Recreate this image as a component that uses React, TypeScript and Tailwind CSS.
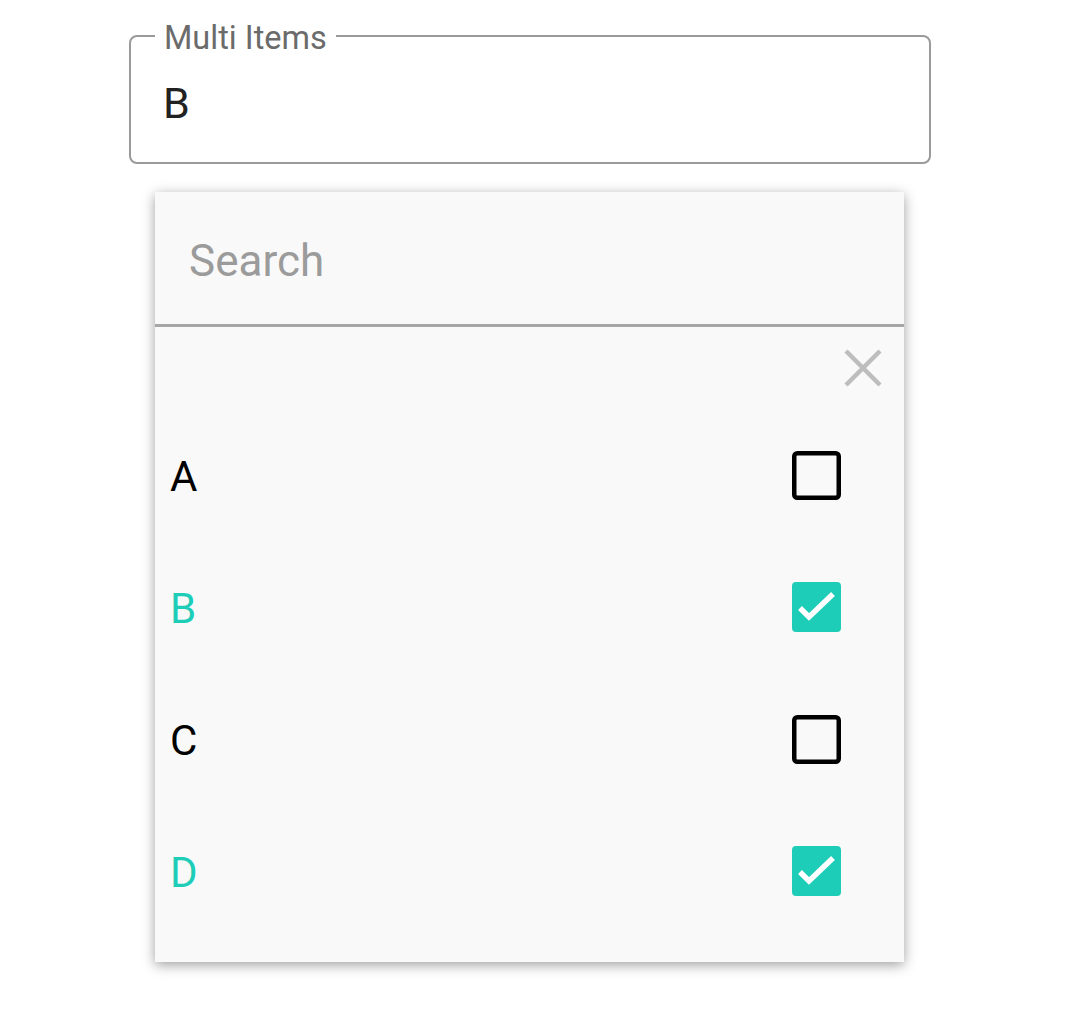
import React from "react";

const items = [
  { name: "A", checked: false },
  { name: "B", checked: true },
  { name: "C", checked: false },
  { name: "D", checked: true },
];

const CheckIcon: React.FC<{ checked: boolean }> = ({ checked }) =>
  checked ? (
    <svg width="49" height="50" viewBox="0 0 49 50">
      <rect x="0" y="0" width="49" height="50" rx="4" fill="#1dcdb8" />
      <path
        d="M8 26 L17 35 L41 12"
        fill="none"
        stroke="#ffffff"
        strokeWidth="5.5"
      />
    </svg>
  ) : (
    <svg width="49" height="49" viewBox="0 0 49 49">
      <rect
        x="2.25"
        y="2.25"
        width="44.5"
        height="44.5"
        rx="3"
        fill="none"
        stroke="#000000"
        strokeWidth="4.5"
      />
    </svg>
  );

export default function App() {
  return (
    <div
      className="min-h-[1021px] bg-white pt-[35px]"
      style={{ fontFamily: "Roboto, 'Noto Sans', sans-serif" }}
    >
      {/* outlined field */}
      <div className="relative ml-[129px] h-[129px] w-[802px] rounded-[8px] border-2 border-[#9a9a9a]">
        <span className="absolute -top-[18px] left-[24px] bg-white px-[9px] text-[32.5px] leading-[38px] text-[#6b6b6b]">
          Multi Items
        </span>
        <div className="pl-[32px] pt-[41px] text-[43px] leading-[50px] text-[#212121]">
          B
        </div>
      </div>

      {/* dropdown */}
      <div className="ml-[155px] mt-[28px] h-[770px] w-[749px] bg-[#f9f9f9] shadow-[0_3px_12px_rgba(0,0,0,0.38)]">
        <div className="flex h-[135px] items-center border-b-[3px] border-[#a6a6a6] pl-[34px]">
          <span className="pt-[5px] text-[44px] text-[#9b9b9b]">Search</span>
        </div>

        <div className="flex justify-end pr-[22px] pt-[22px]">
          <svg width="38" height="38" viewBox="0 0 38 38">
            <path
              d="M2 2 L36 36 M36 2 L2 36"
              stroke="#bdbdbd"
              strokeWidth="4.5"
            />
          </svg>
        </div>

        <div className="mt-[22px] flex flex-col">
          {items.map((item) => (
            <div
              key={item.name}
              className="flex h-[132px] items-center justify-between pl-[15px] pr-[63px]"
            >
              <span
                className={`pt-[3px] text-[42px] leading-none ${
                  item.checked ? "text-[#1dcdb8]" : "text-black"
                }`}
              >
                {item.name}
              </span>
              <CheckIcon checked={item.checked} />
            </div>
          ))}
        </div>
      </div>
    </div>
  );
}
